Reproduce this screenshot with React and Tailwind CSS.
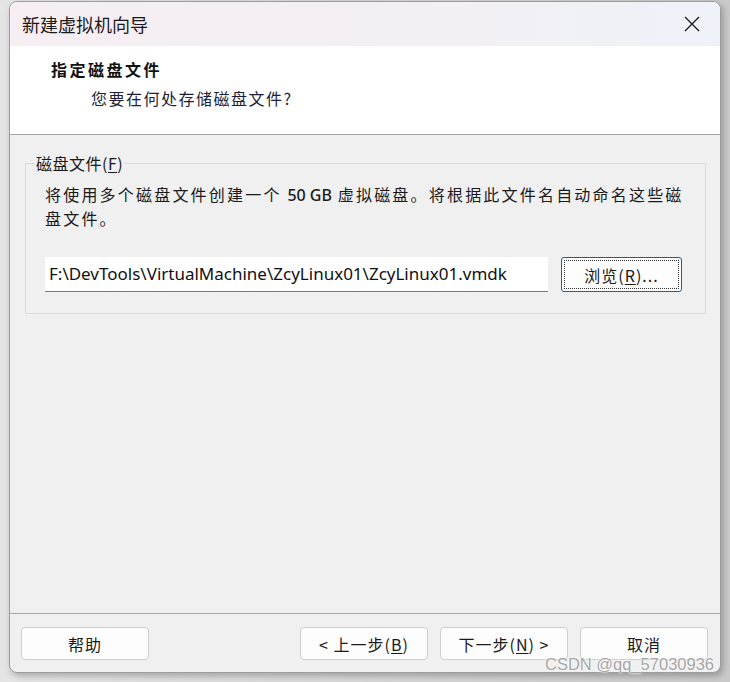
import React from "react";

const cjk = { fontFamily: '"Noto Sans CJK SC", "Noto Sans", sans-serif' };
const latin = { fontFamily: '"Noto Sans", "Noto Sans CJK SC", sans-serif' };

function Btn({ children, className = "" }) {
  return (
    <div
      className={
        "h-[33px] w-[128px] rounded-[4px] border border-[#cfcfcf] bg-[#fdfdfd] flex items-center justify-center text-[16px] text-[#1a1a1a] tracking-[1px] " +
        className
      }
    >
      {children}
    </div>
  );
}

export default function App() {
  return (
    <div
      className="relative w-[730px] h-[682px] overflow-hidden bg-gradient-to-r from-[#e4e4e4] to-[#c9c9c9]"
      style={cjk}
    >
      <div className="ml-[9px] mt-[1px] w-[712px] h-[672px] rounded-[8px] border border-[#9d9d9d] bg-[#f0f0f0] flex flex-col overflow-hidden shadow-[2px_3px_6px_rgba(0,0,0,0.25)]">
        {/* title bar */}
        <div className="h-[44px] shrink-0 flex items-center justify-between pl-[12px] pr-[15px] bg-gradient-to-r from-[#f6eef3] via-[#f4eff4] to-[#eef2f9]">
          <span className="text-[18px] text-[#1a1a1a] leading-none">新建虚拟机向导</span>
          <svg width="18" height="18" viewBox="0 0 18 18" className="mr-[4px]">
            <path d="M2 2 L16 16 M16 2 L2 16" stroke="#1a1a1a" strokeWidth="1.3" fill="none" />
          </svg>
        </div>
        {/* header */}
        <div className="h-[89px] shrink-0 bg-white border-b border-[#a6a6a6] pl-[41px] pt-[12px]">
          <div className="text-[16px] font-bold text-[#111] tracking-[2.5px] leading-[22px]">指定磁盘文件</div>
          <div className="mt-[7px] ml-[40px] text-[16px] text-[#1e1e3a] tracking-[1.5px] leading-[22px]">
            您要在何处存储磁盘文件?
          </div>
        </div>
        {/* content */}
        <div className="flex-1 pt-[28px] pl-[15px] pr-[14px]">
          <div className="relative border border-[#dcdcdc] h-[151px] pl-[19px] pr-[10px] pt-[19px]">
            <div className="absolute left-[9px] top-[-13px] bg-[#f0f0f0] px-[1px] text-[16px] text-[#1a1a1a] leading-[24px] tracking-[0.5px]">
              磁盘文件(<span className="underline underline-offset-2">F</span>)
            </div>
            <div className="text-[16px] text-[#1a1a1a] leading-[23px] tracking-[2.2px] whitespace-nowrap">
              将使用多个磁盘文件创建一个 <span style={latin} className="tracking-normal font-medium text-[16px]">50 GB</span> 虚拟磁盘。将根据此文件名自动命名这些磁
              <br />
              盘文件。
            </div>
            <div className="mt-[27px] flex items-center">
              <div
                className="w-[503px] h-[35px] bg-white border-b border-[#7a7a7a] pl-[4px] flex items-center text-[17px] text-[#111]"
                style={latin}
              >
                F:\DevTools\VirtualMachine\ZcyLinux01\ZcyLinux01.vmdk
              </div>
              <div className="ml-[13px] w-[121px] h-[35px] rounded-[3px] border border-[#0067c0] bg-[#fdfdfd] p-[2px]">
                <div className="w-full h-full border border-dotted border-[#333] flex items-center justify-center text-[16px] text-[#1a1a1a] tracking-[1px]">
                  浏览(<span className="underline underline-offset-2">R</span>)...
                </div>
              </div>
            </div>
          </div>
        </div>
        {/* footer */}
        <div className="h-[59px] shrink-0 border-t border-[#a6a6a6] flex items-start pt-[13px] pl-[11px] pr-[12px]">
          <Btn>帮助</Btn>
          <div className="flex-1" />
          <Btn>
            &lt; 上一步(<span className="underline underline-offset-2">B</span>)
          </Btn>
          <Btn className="ml-[12px]">
            下一步(<span className="underline underline-offset-2">N</span>) &gt;
          </Btn>
          <Btn className="ml-[12px]">取消</Btn>
        </div>
      </div>
      <div
        className="absolute left-[545px] top-[656px] text-[16.5px] text-[#a6a6a6] leading-none [text-shadow:0_0_2px_#fff,0_0_2px_#fff]"
        style={{ fontFamily: '"Liberation Sans", Arial, sans-serif' }}
      >
        CSDN @qq_57030936
      </div>
    </div>
  );
}
